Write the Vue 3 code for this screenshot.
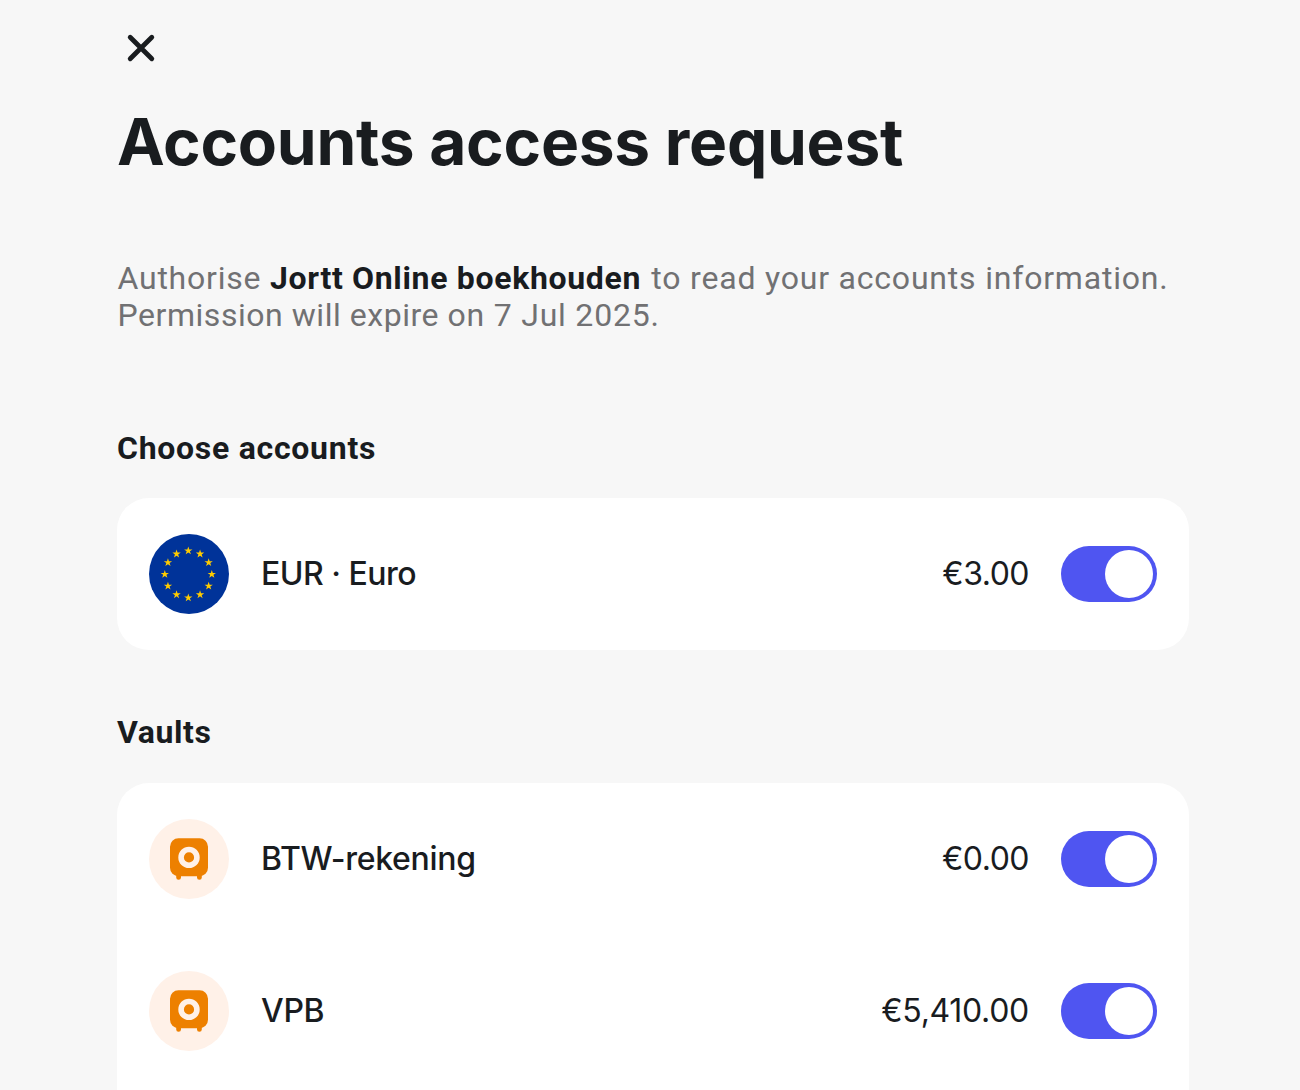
<template>
  <main class="page">
    <button class="close" aria-label="Close" @click="close">
      <svg width="48" height="48" viewBox="0 0 48 48" fill="none">
        <path d="M13.2 13.2L34.8 34.8M34.8 13.2L13.2 34.8" stroke="#191c1f" stroke-width="4.8" stroke-linecap="round" />
      </svg>
    </button>
    <h1>Accounts access request</h1>
    <p class="intro">
      <span class="part">Authorise </span><strong>Jortt Online boekhouden</strong><span class="part scope"> to read your accounts information.</span><br />
      <span class="part tight">Permission will expire on</span><span class="part date"> 7 Jul 2025.</span>
    </p>

    <section v-for="group in groups" :key="group.title" class="group" :class="group.id">
      <h2>{{ group.title }}</h2>
      <div class="card">
        <div v-for="item in group.items" :key="item.name" class="row">
          <svg v-if="group.id === 'accounts'" class="avatar" viewBox="0 0 80 80">
            <circle cx="40" cy="40" r="40" fill="#003399" />
            <polygon
              v-for="star in stars"
              :key="star.id"
              :points="starPoints"
              :transform="`translate(${star.x} ${star.y})`"
              fill="#ffcc00"
            />
          </svg>
          <svg v-else class="avatar" viewBox="0 0 80 80">
            <circle cx="40" cy="40" r="40" fill="#fff1e8" />
            <rect x="21" y="19.3" width="38" height="38" rx="8.5" fill="#ed8000" />
            <path d="M27.2 55V58.4a2.4 2.4 0 0 0 4.8 0V55ZM48 55V58.4a2.4 2.4 0 0 0 4.8 0V55Z" fill="#ed8000" />
            <circle cx="40" cy="38.4" r="7.9" fill="none" stroke="#fff1e8" stroke-width="5.6" />
          </svg>
          <span class="name" :class="item.id">{{ item.name }}</span>
          <span class="amount" :class="item.id">{{ item.amount }}</span>
          <button
            class="toggle"
            :class="{ on: item.enabled }"
            role="switch"
            :aria-checked="item.enabled"
            @click="item.enabled = !item.enabled"
          >
            <span class="knob"></span>
          </button>
        </div>
      </div>
    </section>
  </main>
</template>

<script setup>
import { reactive } from 'vue';

const groups = reactive([
  {
    id: 'accounts',
    title: 'Choose accounts',
    items: [{ id: 'eur', name: 'EUR · Euro', amount: '€3.00', enabled: true }],
  },
  {
    id: 'vaults',
    title: 'Vaults',
    items: [
      { id: 'btw', name: 'BTW-rekening', amount: '€0.00', enabled: true },
      { id: 'vpb', name: 'VPB', amount: '€5,410.00', enabled: true },
    ],
  },
]);

// 12 upright stars on a ring
const stars = Array.from({ length: 12 }, (_, i) => {
  const a = (i * Math.PI) / 6;
  return { id: i, x: 39.3 + 23.5 * Math.sin(a), y: 40.3 - 23.5 * Math.cos(a) };
});

const starPoints = Array.from({ length: 10 }, (_, i) => {
  const r = i % 2 ? 1.7 : 4.4;
  const a = (i * Math.PI) / 5;
  return `${(r * Math.sin(a)).toFixed(2)},${(-r * Math.cos(a)).toFixed(2)}`;
}).join(' ');

function close() {
  window.history.back();
}
</script>

<style>
body {
  background: #f7f7f7;
}
</style>

<style scoped>
.page {
  box-sizing: border-box;
  height: 1090px;
  overflow: hidden;
  padding: 24px 111px 0 117px;
  background: #f7f7f7;
  color: #191c1f;
  font-family: Inter, sans-serif;
}
button {
  display: block;
  padding: 0;
  border: none;
  background: none;
  cursor: pointer;
}
.close svg {
  display: block;
}
h1 {
  margin: 32px 0 0;
  font-size: 64px;
  line-height: 76px;
  font-weight: 700;
  letter-spacing: -0.26px;
  white-space: nowrap;
}
.intro {
  margin: 80px 0 0;
  padding-left: 0.5px;
  font-family: Roboto, sans-serif;
  font-size: 32px;
  line-height: 37px;
  color: #717173;
  white-space: nowrap;
}
.intro .part {
  white-space: pre;
  letter-spacing: 0.77px;
}
.intro .part.tight {
  letter-spacing: 0.54px;
}
.intro .part.scope {
  margin-left: 1.5px;
  letter-spacing: 0.8px;
}
.intro .part.date {
  margin-left: 0.5px;
}
.intro strong {
  color: #191c1f;
  font-weight: 700;
  letter-spacing: 0.67px;
}
.group {
  margin-top: 64px;
}
.intro + .group {
  margin-top: 96px;
}
h2 {
  margin: 0;
  font-family: Roboto, sans-serif;
  font-size: 32px;
  line-height: 37px;
  font-weight: 700;
  letter-spacing: 0.72px;
}
.vaults h2 {
  letter-spacing: 0.6px;
}
.card {
  margin-top: 32px;
  border-radius: 32px;
  background: #fff;
}
.accounts .card {
  margin-top: 31px;
}
.vaults .card {
  padding-bottom: 64px;
}
.row {
  box-sizing: border-box;
  height: 152px;
  padding: 0 32px;
  display: flex;
  align-items: center;
}
.avatar {
  width: 80px;
  height: 80px;
  margin-right: 32px;
}
.name,
.amount {
  font-size: 32px;
  line-height: 48px;
  white-space: nowrap;
}
.name {
  flex: 1;
  font-weight: 450;
  letter-spacing: -0.3px;
}
.name.eur {
  letter-spacing: -0.5px;
}
.amount {
  letter-spacing: -0.5px;
}
.amount.vpb {
  letter-spacing: -0.3px;
}
.toggle {
  box-sizing: border-box;
  width: 96px;
  height: 56px;
  margin-left: 32px;
  padding: 4px;
  display: flex;
  border-radius: 28px;
  background: #c9c9cd;
}
.toggle.on {
  justify-content: flex-end;
  background: #4f55f1;
}
.knob {
  width: 48px;
  height: 48px;
  border-radius: 50%;
  background: #fff;
}
</style>
